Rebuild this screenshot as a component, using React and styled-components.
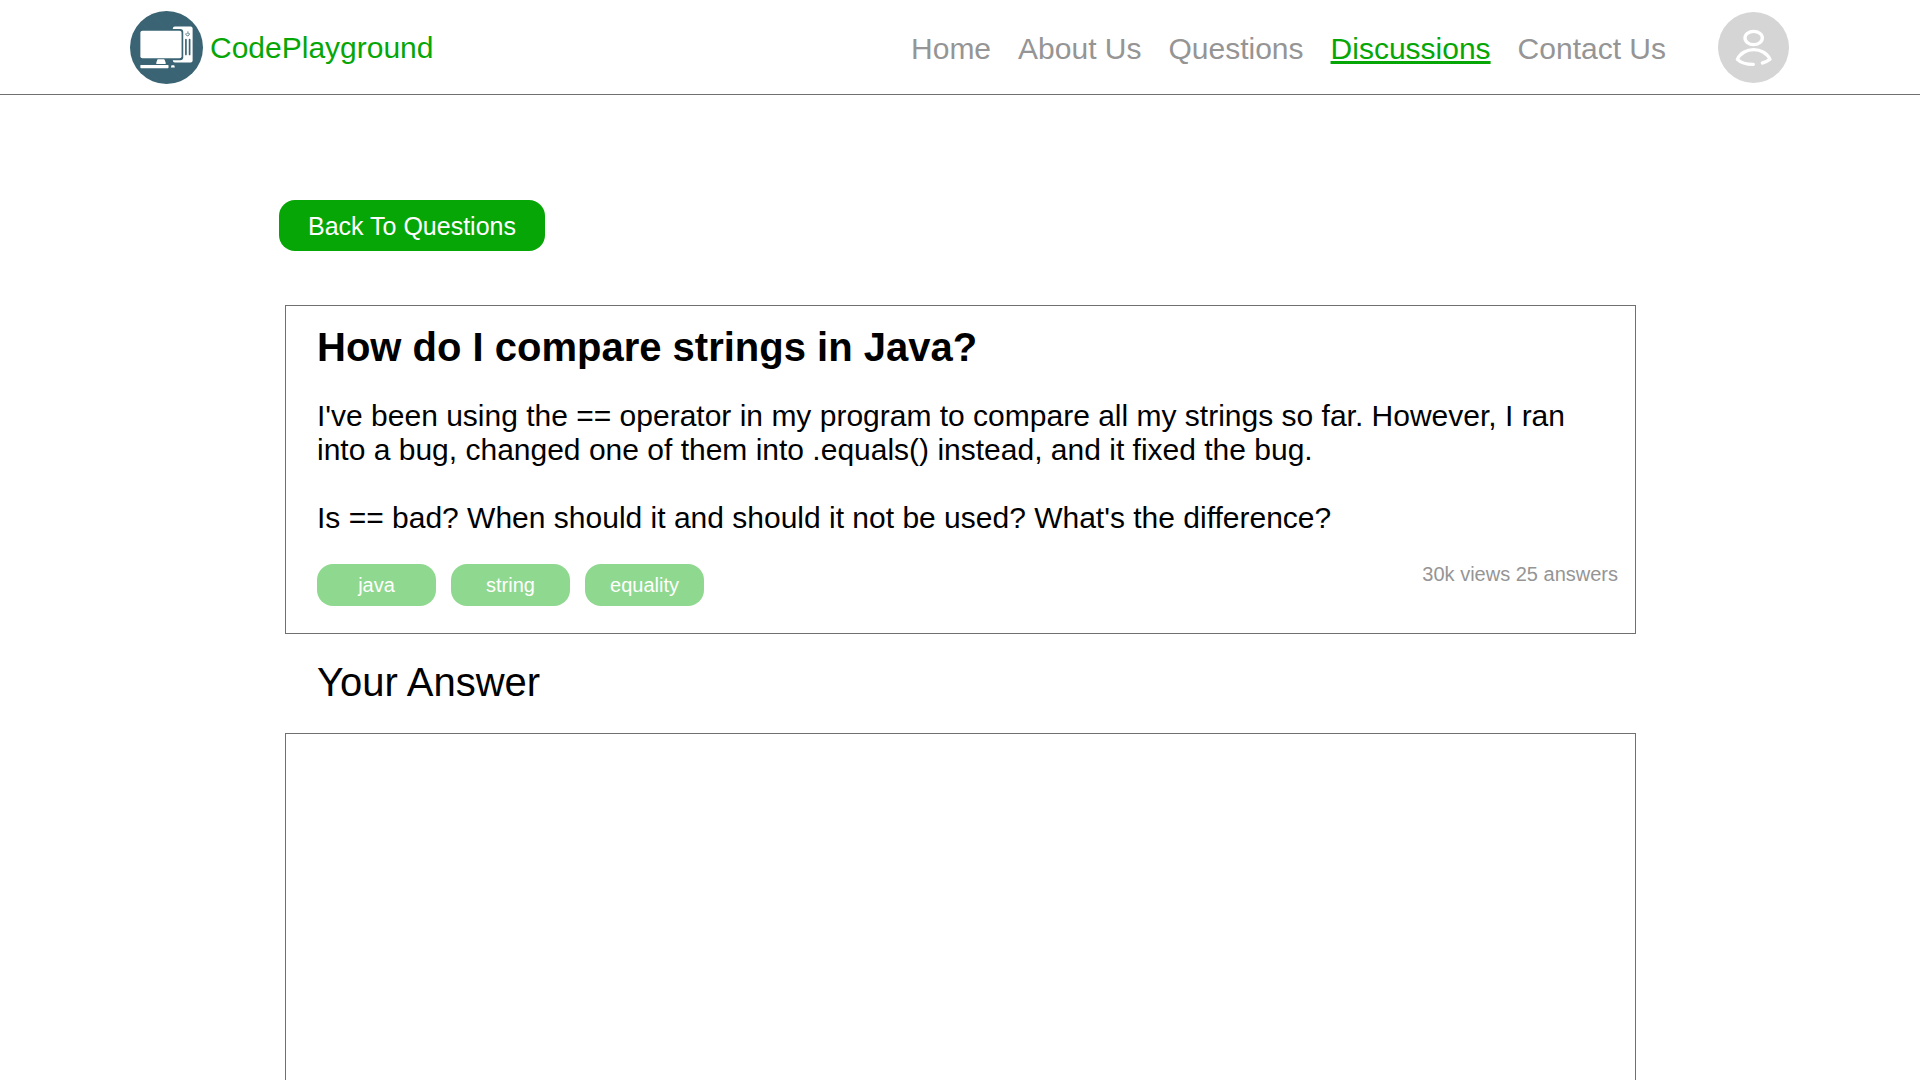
import React from "react";
import styled, { createGlobalStyle } from "styled-components";

const GlobalStyle = createGlobalStyle`
  *, *::before, *::after { box-sizing: border-box; }
  body {
    margin: 0;
    background: #fff;
    color: #000;
    font-family: "Liberation Sans", Arial, Helvetica, sans-serif;
    font-size: 30px;
    line-height: 34px;
  }
  h1, h2, p { margin: 0; }
`;

const Page = styled.div`
  display: flex;
  flex-direction: column;
  min-height: 100vh;
`;

const Header = styled.header`
  display: flex;
  align-items: center;
  justify-content: space-between;
  min-height: 95px;
  padding: 1px 131px 0 130px;
  border-bottom: 1px solid #707070;
`;

const Brand = styled.a`
  display: flex;
  align-items: center;
  gap: 7px;
  color: #06a606;
  text-decoration: none;

  svg { width: 73px; height: 73px; }
`;

const HeaderEnd = styled.div`
  display: flex;
  align-items: center;
  gap: 52px;
`;

const Nav = styled.nav`
  display: flex;
  gap: 27px;
  padding-top: 3px;
`;

const NavLink = styled.a`
  color: ${({ $active }) => ($active ? "#06a606" : "#959595")};
  text-decoration: ${({ $active }) => ($active ? "underline" : "none")};
`;

const ProfileButton = styled.button`
  display: flex;
  padding: 0;
  border: 0;
  border-radius: 50%;
  background: none;
  cursor: pointer;

  svg { width: 71px; height: 71px; }
`;

const Toolbar = styled.div`
  display: flex;
  padding: 105px 279px 0;
`;

const BackButton = styled.button`
  height: 51px;
  padding: 0 29px;
  border: 0;
  border-radius: 16px;
  background: #06a606;
  color: #fff;
  font: 25px/28px "Liberation Sans", Arial, Helvetica, sans-serif;
  cursor: pointer;
`;

const Content = styled.main`
  display: flex;
  flex: 1;
  flex-direction: column;
  padding: 54px 284px 0 285px;
`;

const Card = styled.article`
  padding: 18px 17px 27px 31px;
  border: 1px solid #707070;
`;

const Title = styled.h1`
  font-size: 40px;
  line-height: 46px;
`;

const Body = styled.div`
  display: flex;
  flex-direction: column;
  gap: 34px;
  margin-top: 29px;
`;

const CardFooter = styled.footer`
  display: flex;
  align-items: flex-start;
  justify-content: space-between;
  margin-top: 29px;
  font-size: 20px;
  line-height: 20px;
`;

const Tags = styled.div`
  display: flex;
  gap: 15px;
`;

const Tag = styled.a`
  display: flex;
  align-items: center;
  justify-content: center;
  width: 119px;
  height: 42px;
  border-radius: 16px;
  background: #8fd88f;
  color: #fff;
  text-decoration: none;
`;

const Stats = styled.p`
  color: #959595;
`;

const AnswerLabel = styled.label`
  padding: 25px 32px 28px;
  font-size: 40px;
  line-height: 46px;
`;

const AnswerBox = styled.textarea`
  flex: 1;
  width: 100%;
  min-height: 300px;
  padding: 24px 31px;
  border: 1px solid #707070;
  border-bottom: 0;
  border-radius: 0;
  outline: 0;
  resize: none;
  background: #fff;
  font: inherit;
`;

const LogoIcon = () => (
  <svg viewBox="29 20 218 218" aria-hidden="true">
    <circle cx="138" cy="129" r="109" fill="#3a6474" />
    <path
      d="M92 28l42 42M60 54l28 24M196 84l46 46M50 166l66 66M124 166l56 56M168 40l-24 24"
      stroke="#426b7a"
      strokeWidth="1.5"
      fill="none"
    />
    <rect x="157" y="66" width="59" height="108" rx="6" fill="#fff" />
    <rect x="58" y="74" width="130" height="93" rx="9" fill="#3a6474" />
    <rect x="60" y="79" width="123" height="82" rx="6" fill="#fff" />
    <path d="M112 164h18q2 0 3 3l3 9q0 2-2 2h-25q-2 0-2-2l3-9q1-3 2-3z" fill="#fff" />
    <rect x="60" y="181" width="84" height="10" rx="2" fill="#fff" />
    <path d="M153 182h8l2 7h-12z" fill="#fff" />
    <path d="M196 105v45M207 105v45" stroke="#3a6474" strokeWidth="5" strokeLinecap="round" />
    <path d="M197 86a5 5 0 1 0 8 0M202 81v8" stroke="#3a6474" strokeWidth="2.5" fill="none" />
  </svg>
);

const ProfileIcon = () => (
  <svg viewBox="55 36 213 213" aria-hidden="true">
    <circle cx="161.5" cy="142.5" r="106.5" fill="#d5d5d5" />
    <g fill="none" stroke="#fff" strokeWidth="10" strokeLinecap="round">
      <ellipse cx="162" cy="114" rx="26" ry="20" />
      <path d="M161 193C140 193 121 186 113 178C121 160 141 149 162 149C183 149 203 160 211 178C205 183 197 187 188 189" strokeLinejoin="round" />
    </g>
  </svg>
);

const links = ["Home", "About Us", "Questions", "Discussions", "Contact Us"];
const tags = ["java", "string", "equality"];

export default function App() {
  return (
    <Page>
      <GlobalStyle />
      <Header>
        <Brand href="#">
          <LogoIcon />
          CodePlayground
        </Brand>
        <HeaderEnd>
          <Nav>
            {links.map((name) => (
              <NavLink
                key={name}
                href="#"
                $active={name === "Discussions"}
                aria-current={name === "Discussions" ? "page" : undefined}
              >
                {name}
              </NavLink>
            ))}
          </Nav>
          <ProfileButton type="button" aria-label="Profile">
            <ProfileIcon />
          </ProfileButton>
        </HeaderEnd>
      </Header>
      <Toolbar>
        <BackButton type="button">Back To Questions</BackButton>
      </Toolbar>
      <Content>
        <Card>
          <Title>How do I compare strings in Java?</Title>
          <Body>
            <p>
              I've been using the == operator in my program to compare all my strings so far. However, I ran
              into a bug, changed one of them into .equals() instead, and it fixed the bug.
            </p>
            <p>Is == bad? When should it and should it not be used? What's the difference?</p>
          </Body>
          <CardFooter>
            <Tags>
              {tags.map((tag) => (
                <Tag key={tag} href="#">{tag}</Tag>
              ))}
            </Tags>
            <Stats>30k views 25 answers</Stats>
          </CardFooter>
        </Card>
        <AnswerLabel htmlFor="answer">Your Answer</AnswerLabel>
        <AnswerBox id="answer" />
      </Content>
    </Page>
  );
}
